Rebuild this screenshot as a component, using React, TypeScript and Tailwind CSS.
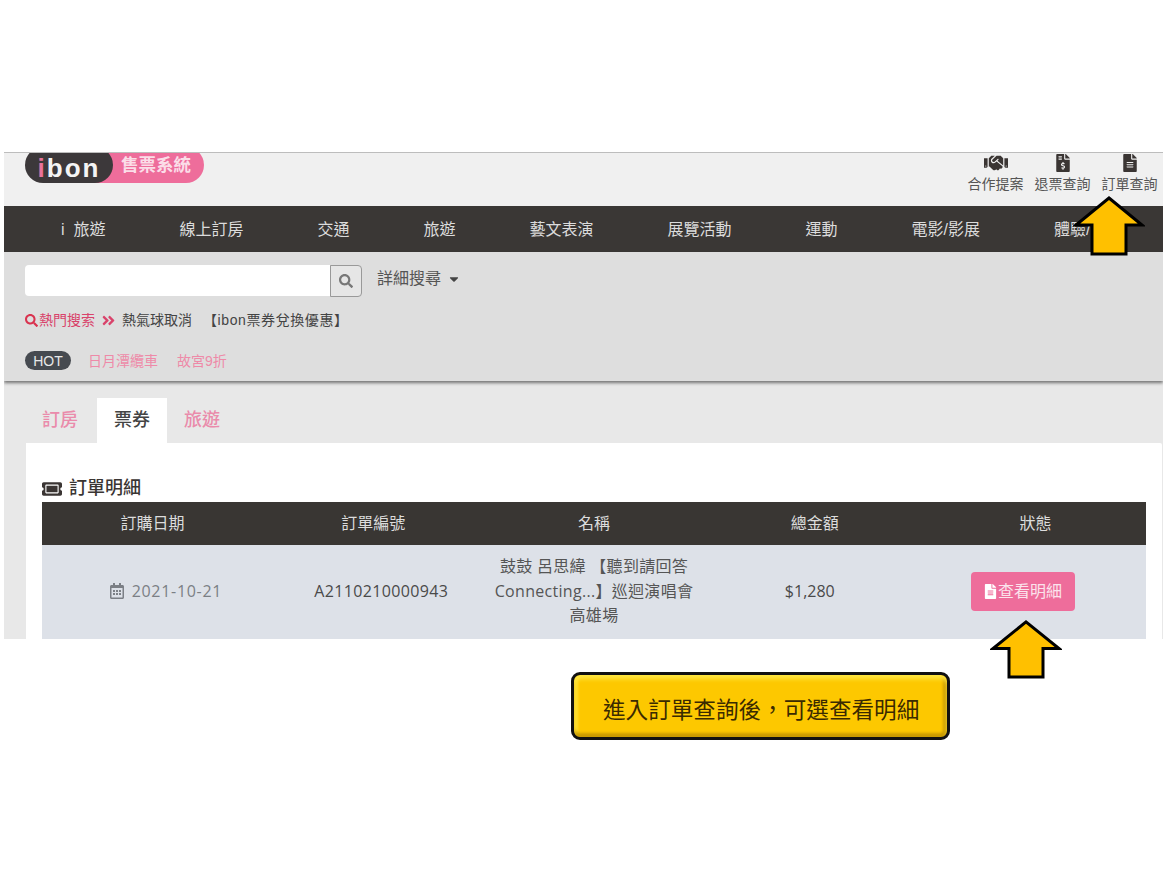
import React from "react";
import { FaHandshake, FaFileInvoiceDollar, FaFileAlt, FaRegCalendarAlt, FaSearch, FaAngleDoubleRight, FaCaretDown, FaTicketAlt } from "react-icons/fa";

const font = "font-['Liberation_Sans','Noto_Sans_CJK_TC',sans-serif]";
const nav = ["i\u00a0\u00a0旅遊", "線上訂房", "交通", "旅遊", "藝文表演", "展覽活動", "運動", "電影/影展", "體驗/課程"];

function Arrow({ className }: { className: string }) {
  return (
    <svg className={className} viewBox="0 0 72 60" preserveAspectRatio="none" fill="#ffc000" stroke="#000" strokeWidth="3">
      <path d="M36 2 L69 29 L53 29 L53 58 L19 58 L19 29 L3 29 Z" />
    </svg>
  );
}

export default function App() {
  return (
    <div className={`relative w-[1163px] h-[872px] bg-white pt-[152px] overflow-hidden ${font}`}>
      <div className="ml-[4px] h-[487px] overflow-hidden flex flex-col border-t border-[#bdbdbd]">
        <header className="h-[53px] shrink-0 bg-[#f0f0f0] flex justify-between pl-[21px] pr-[5px] overflow-hidden">
          <div className="flex h-[36px] -mt-[6px] items-stretch">
            <div className="relative z-10 w-[88px] h-[36px] pt-[6px] bg-[#3c383a] rounded-full flex items-center justify-center text-[26px] tracking-[2px] font-bold leading-none text-[#f4f4f4] font-['Liberation_Sans',sans-serif]">
              <span className="text-[#e8739b]">i</span>bon
            </div>
            <div className="-ml-[18px] w-[109px] h-[36px] bg-[#ee6d9b] rounded-r-full flex items-center justify-end pr-[13px] text-[17.5px] font-bold text-[#fbdde8]">
              售票系統
            </div>
          </div>
          <div className="flex gap-[10px] text-[14px] text-[#555] leading-none">
            {[
              [<FaHandshake size={24} />, "合作提案"],
              [<FaFileInvoiceDollar size={18} />, "退票查詢"],
              [<FaFileAlt size={18} />, "訂單查詢"],
            ].map(([icon, label], i) => (
              <div key={i} className="flex flex-col items-center w-[57px]">
                <div className="h-[20px] flex items-center text-[#3a3533]">{icon}</div>
                <div className="mt-[4px]">{label}</div>
              </div>
            ))}
          </div>
        </header>
        <nav className="h-[46px] shrink-0 bg-[#3a3735] flex items-center gap-[74px] pl-[57px] pt-[2px] text-[16px] text-[#dcdcdc] whitespace-nowrap overflow-hidden">
          {nav.map((n) => (
            <span key={n}>{n}</span>
          ))}
        </nav>
        <section className="h-[129px] shrink-0 bg-[#dedede] pl-[21px] pt-[13px] shadow-[0_2px_3px_rgba(0,0,0,0.5)] relative z-10">
          <div className="flex items-center h-[31px]">
            <div className="w-[305px] h-[31px] bg-white rounded-l-[4px]" />
            <div className="w-[32px] h-[32px] bg-[#e6e6e6] border border-[#999] rounded-r-[4px] flex items-center justify-center text-[#777] text-[14px]">
              <FaSearch />
            </div>
            <span className="ml-[15px] text-[16px] text-[#555] -mt-[3px]">詳細搜尋</span>
            <FaCaretDown className="ml-[6px] text-[#444] text-[14px] -mt-[3px]" />
          </div>
          <div className="flex items-center h-[20px] mt-[14px] text-[14px] leading-none">
            <FaSearch className="text-[#d9334f] text-[13px] mr-[1px]" />
            <span className="text-[#d9436b]">熱門搜索</span>
            <FaAngleDoubleRight className="ml-[6px] mr-[6px] text-[#d9436b] text-[15px]" />
            <span className="text-[#444]">熱氣球取消</span>
            <span className="ml-[11px] text-[#444] tracking-[0.6px]">【ibon票券兌換優惠】</span>
          </div>
          <div className="flex items-center mt-[21px] text-[14px] leading-none">
            <span className="w-[46px] h-[19px] bg-[#464a50] rounded-full flex items-center justify-center text-[#e8e8e8]">HOT</span>
            <span className="ml-[17px] text-[#ee8aa8]">日月潭纜車</span>
            <span className="ml-[19px] text-[#ee8aa8]">故宮9折</span>
          </div>
        </section>
        <main className="flex-1 bg-[#e8e8e8] pl-[22px] pr-[1px] pt-[17px] flex flex-col">
          <div className="flex h-[45px] shrink-0 text-[18px] font-medium">
            <div className="w-[68px] mr-[3px] flex items-center justify-center text-[#ea8bab]">訂房</div>
            <div className="w-[70px] mr-[1px] bg-white flex items-center justify-center text-[#444]">票券</div>
            <div className="w-[68px] flex items-center justify-center text-[#ea8bab]">旅遊</div>
          </div>
          <div className="flex-1 bg-white px-[16px] pt-[32px] rounded-tr-[2px]">
            <div className="flex items-center h-[27px] text-[18px] text-[#3a3533] font-medium">
              <FaTicketAlt className="w-[20px] h-[18px] mr-[7px]" />
              訂單明細
            </div>
            <div className="grid grid-cols-5 h-[43px] bg-[#393633] text-[16px] text-[#dcdcdc] items-center text-center">
              <div>訂購日期</div>
              <div>訂單編號</div>
              <div>名稱</div>
              <div>總金額</div>
              <div>狀態</div>
            </div>
            <div className="grid grid-cols-5 h-[94px] bg-[#dde1e8] text-[16px] items-center text-center pb-[2px] font-['Open_Sans','Noto_Sans_CJK_TC',sans-serif]">
              <div className="flex items-center justify-center gap-[7px] text-[#7b7f85] pl-[26px]">
                <FaRegCalendarAlt className="text-[16px]" />
                <span className="tracking-[0.7px]">2021-10-21</span>
              </div>
              <div className="text-[#4a4a4a] pl-[16px] tracking-[0.35px]">A2110210000943</div>
              <div className="text-[#555] leading-[24.5px] -mx-[4px] tracking-[0.3px]">
                鼓鼓 呂思緯 【聽到請回答
                <br />
                Connecting...】巡迴演唱會
                <br />
                高雄場
              </div>
              <div className="text-[#4a4a4a] pr-[10px]">$1,280</div>
              <div className="flex justify-center pr-[26px]">
                <div className="w-[104px] h-[39px] bg-[#ee6d9b] rounded-[4px] flex items-center justify-center text-[#fbe3ec]">
                  <FaFileAlt className="text-white text-[15px]" />
                  查看明細
                </div>
              </div>
            </div>
          </div>
        </main>
      </div>

      <div className="ml-[571px] mt-[33px] w-[379px] h-[68px] rounded-[9px] border-[3px] border-[#111] bg-[#fdc800] shadow-[inset_0_4px_4px_#ffe640,inset_0_-4px_3px_#c99a00,inset_4px_0_3px_#ffdf30,inset_-4px_0_3px_#c99a00] flex items-center pl-[29px] pt-[5px] text-[22.6px] text-[#3a2a00] whitespace-nowrap font-['Noto_Sans_CJK_TC',serif]">
        {"進入訂單查詢後\uFF0C可選查看明細"}
      </div>

      <Arrow className="absolute z-20 left-[1073px] top-[196px] w-[72px] h-[60px]" />
      <Arrow className="absolute z-20 left-[990px] top-[620px] w-[72px] h-[59px]" />
    </div>
  );
}
